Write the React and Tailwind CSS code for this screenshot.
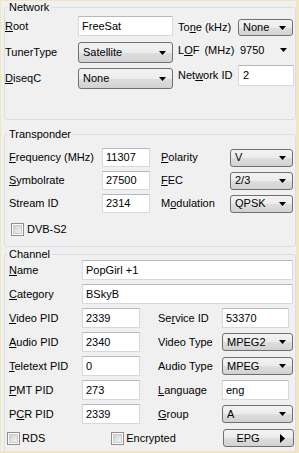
import React from "react";

const Arrow = () => (
  <svg width="7" height="4" viewBox="0 0 7 4" className="shrink-0">
    <polygon points="0,0 7,0 3.5,4" fill="#000" />
  </svg>
);

const Sel = ({ value, className }) => (
  <div
    className={
      "flex items-center justify-between pl-[4px] pr-[6px] border border-[#707070] rounded-[3px] bg-[linear-gradient(#f3f3f3_0%,#ececec_50%,#dedede_51%,#d2d2d2_100%)] " +
      className
    }
  >
    <span className="leading-none">{value}</span>
    <Arrow />
  </div>
);

const Inp = ({ value, className }) => (
  <div
    className={
      "flex items-center pl-[3px] bg-white border border-[#d6d9de] border-t-[#b5b8bf] " +
      className
    }
  >
    <span className="leading-none">{value}</span>
  </div>
);

const Check = () => (
  <span className="w-[13px] h-[13px] border border-[#8e8f8f] bg-white p-[1px] shrink-0 flex">
    <span className="flex-1 bg-[linear-gradient(135deg,#cfd1d4,#f3f3f3)] border border-[#c9cacc]" />
  </span>
);

const Legend = ({ children }) => (
  <legend className="ml-[2px] px-[2px] leading-[13px] p-0">{children}</legend>
);

export default function App() {
  return (
    <div className="w-[299px] h-[453px] overflow-hidden bg-[#f0f0f0] border-t border-l border-r-[3px] border-b-2 border-[#f3e5bd] font-['Liberation_Sans',Arial,sans-serif] text-[11px] text-black">
      {/* Network */}
      <fieldset className="ml-[3px] h-[119px] m-0 p-0 border border-[#d5dfe5] rounded-[3px]">
        <Legend>Network</Legend>
        <div className="flex">
          <div className="flex flex-col w-[173px]">
            <div className="mt-[2px] h-[20px] flex items-center">
              <span className="w-[73px]"><u>R</u>oot</span>
              <Inp value="FreeSat" className="w-[95px] h-[20px]" />
            </div>
            <div className="mt-[6px] h-[21px] flex items-center">
              <span className="w-[73px]">TunerType</span>
              <Sel value="Satellite" className="w-[95px] h-[21px]" />
            </div>
            <div className="mt-[5px] h-[21px] flex items-center">
              <span className="w-[73px]"><u>D</u>iseqC</span>
              <Sel value="None" className="w-[95px] h-[21px]" />
            </div>
          </div>
          <div className="flex flex-col">
            <div className="mt-[5px] h-[17px] flex items-center">
              <span className="w-[60px] min-w-0 shrink-0 whitespace-nowrap">To<u>n</u>e (kHz)</span>
              <Sel value="None" className="w-[55px] h-[17px]" />
            </div>
            <div className="mt-[4px] h-[20px] flex items-center">
              <span className="w-[60px] min-w-0 shrink-0 whitespace-nowrap">L<u>O</u>F<span className="ml-[5px]">(MHz)</span></span>
              <div className="w-[55px] h-[20px] flex items-center justify-between pl-[2px] pr-[6px]">
                <span className="leading-none">9750</span>
                <Arrow />
              </div>
            </div>
            <div className="mt-[5px] h-[21px] flex items-center">
              <span className="w-[60px] min-w-0 shrink-0 whitespace-nowrap">Net<u>w</u>ork ID</span>
              <Inp value="2" className="w-[56px] h-[21px] pl-[4px]" />
            </div>
          </div>
        </div>
      </fieldset>

      {/* Transponder */}
      <fieldset className="ml-[3px] mt-[8px] h-[119px] m-0 p-0 border border-[#d5dfe5] rounded-[3px]">
        <Legend>Transponder</Legend>
        <div className="flex pl-[4px]">
          <div className="flex flex-col w-[141px]">
            <div className="mt-[7px] h-[19px] flex items-center">
              <span className="w-[93px]"><u>F</u>requency (MHz)</span>
              <Inp value="11307" className="w-[48px] h-[19px]" />
            </div>
            <div className="mt-[4px] h-[19px] flex items-center">
              <span className="w-[93px]"><u>S</u>ymbolrate</span>
              <Inp value="27500" className="w-[48px] h-[19px]" />
            </div>
            <div className="mt-[4px] h-[19px] flex items-center">
              <span className="w-[93px]">Stream ID</span>
              <Inp value="2314" className="w-[48px] h-[19px]" />
            </div>
            <div className="mt-[8px] flex items-center pl-[2px]">
              <Check />
              <span className="ml-[3px]">DVB-S2</span>
            </div>
          </div>
          <div className="flex flex-col ml-[11px]">
            <div className="mt-[7px] h-[19px] flex items-center">
              <span className="w-[69px]"><u>P</u>olarity</span>
              <Sel value="V" className="w-[63px] h-[18px]" />
            </div>
            <div className="mt-[4px] h-[19px] flex items-center">
              <span className="w-[69px]"><u>F</u>EC</span>
              <Sel value="2/3" className="w-[63px] h-[18px]" />
            </div>
            <div className="mt-[4px] h-[19px] flex items-center">
              <span className="w-[69px]">M<u>o</u>dulation</span>
              <Sel value="QPSK" className="w-[63px] h-[18px]" />
            </div>
          </div>
        </div>
      </fieldset>

      {/* Channel */}
      <fieldset className="ml-[3px] mt-[1px] h-[220px] m-0 p-0 border border-b-0 border-[#d5dfe5] rounded-t-[3px]">
        <Legend>Channel</Legend>
        <div className="flex flex-col pl-[4px]">
          <div className="-mt-[1px] h-[20px] flex items-center">
            <span className="w-[73px]"><u>N</u>ame</span>
            <Inp value="PopGirl +1" className="w-[211px] h-[20px]" />
          </div>
          <div className="mt-[4px] h-[20px] flex items-center">
            <span className="w-[73px]"><u>C</u>ategory</span>
            <Inp value="BSkyB" className="w-[211px] h-[20px]" />
          </div>
          {[
            [<><u>V</u>ideo PID</>, "2339", <>Se<u>r</u>vice ID</>, "53370", false],
            [<><u>A</u>udio PID</>, "2340", <>Video Type</>, "MPEG2", true],
            [<><u>T</u>eletext PID</>, "0", <>Audio Type</>, "MPEG", true],
            [<><u>P</u>MT PID</>, "273", <><u>L</u>anguage</>, "eng", false],
            [<>P<u>C</u>R PID</>, "2339", <><u>G</u>roup</>, "A", true],
          ].map(([l, v, rl, rv, sel], i) => (
            <div key={i} className="mt-[4px] h-[20px] flex items-center">
              <span className="w-[73px]">{l}</span>
              <Inp value={v} className="w-[58px] h-[20px]" />
              <span className="ml-[18px] w-[64px]">{rl}</span>
              {sel ? (
                <Sel value={rv} className="w-[71px] h-[18px]" />
              ) : (
                <Inp value={rv} className="w-[67px] h-[20px]" />
              )}
            </div>
          ))}
          <div className="mt-[5px] h-[18px] flex items-center -ml-[2px]">
            <Check />
            <span className="ml-[2px]">RDS</span>
            <span className="ml-[66px] flex items-center">
              <Check />
              <span className="ml-[2px]">Encrypted</span>
            </span>
            <div className="ml-auto mr-[1px] w-[71px] h-[18px] flex items-center border border-[#707070] rounded-[3px] bg-[linear-gradient(#f3f3f3_0%,#ececec_50%,#dedede_51%,#d2d2d2_100%)]">
              <span className="flex-1 text-center pl-[2px] leading-none">EPG</span>
              <svg width="5" height="9" viewBox="0 0 5 9" className="mr-[8px] ml-[10px]">
                <polygon points="0,0 5,4.5 0,9" fill="#000" />
              </svg>
            </div>
          </div>
        </div>
      </fieldset>
    </div>
  );
}
